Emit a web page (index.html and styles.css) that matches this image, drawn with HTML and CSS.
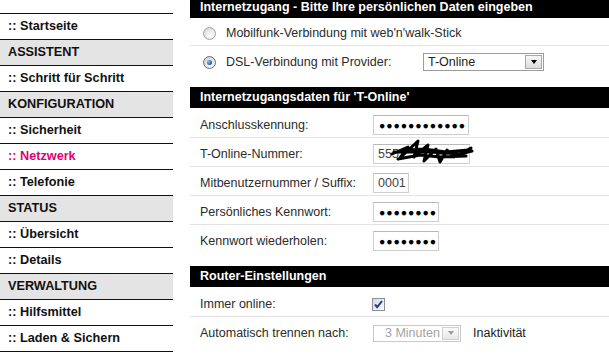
FILE: index.html
```html
<!DOCTYPE html>
<html lang="de">
<head>
<meta charset="utf-8">
<title>Netzwerk</title>
<link rel="stylesheet" href="styles.css">
</head>
<body>
<div class="page">
  <nav class="side">
    <a class="side-item">:: Startseite</a>
    <div class="side-item side-group">ASSISTENT</div>
    <a class="side-item">:: Schritt für Schritt</a>
    <div class="side-item side-group">KONFIGURATION</div>
    <a class="side-item">:: Sicherheit</a>
    <a class="side-item active">:: Netzwerk</a>
    <a class="side-item">:: Telefonie</a>
    <div class="side-item side-group">STATUS</div>
    <a class="side-item">:: Übersicht</a>
    <a class="side-item">:: Details</a>
    <div class="side-item side-group">VERWALTUNG</div>
    <a class="side-item">:: Hilfsmittel</a>
    <a class="side-item">:: Laden &amp; Sichern</a>
  </nav>

  <main class="main">
    <section class="sec">
      <h2 class="bar bar-first">Internetzugang - Bitte Ihre persönlichen Daten eingeben</h2>
      <div class="row row-first-s1">
        <span class="radio"></span>
        <span class="rlabel">Mobilfunk-Verbindung mit web'n'walk-Stick</span>
      </div>
      <div class="row row-last">
        <span class="radio checked"></span>
        <span class="rlabel rlabel-fixed">DSL-Verbindung mit Provider:</span>
        <div class="select select-provider">
          <span class="select-text">T-Online</span>
          <span class="select-btn"><span class="tri"></span></span>
        </div>
      </div>
    </section>

    <section class="sec">
      <h2 class="bar">Internetzugangsdaten für 'T-Online'</h2>
      <div class="row row-first">
        <span class="label">Anschlusskennung:</span>
        <div class="field pw w96">●●●●●●●●●●●●</div>
      </div>
      <div class="row">
        <span class="label">T-Online-Nummer:</span>
        <div class="field-wrap">
          <div class="field w97 plain">555</div>
          <svg class="scribble" width="84" height="28" viewBox="0 0 84 28">
            <path d="M2 16 L18 9 L10 20 L28 3 L24 19 L38 7 L34 23 L46 11 L50 24 L57 12 L64 19 L81 10 M4 14 L40 14 L70 16 L82 13 M8 21 L30 17 L50 19 L76 18 M16 12 L34 11 L56 14 L78 12" fill="none" stroke="#000" stroke-width="3" stroke-linecap="round" stroke-linejoin="round"/>
          </svg>
        </div>
      </div>
      <div class="row">
        <span class="label">Mitbenutzernummer / Suffix:</span>
        <div class="field w36 plain">0001</div>
      </div>
      <div class="row">
        <span class="label">Persönliches Kennwort:</span>
        <div class="field pw w66">●●●●●●●●</div>
      </div>
      <div class="row row-last">
        <span class="label">Kennwort wiederholen:</span>
        <div class="field pw w66">●●●●●●●●</div>
      </div>
    </section>

    <section class="sec">
      <h2 class="bar">Router-Einstellungen</h2>
      <div class="row row-first">
        <span class="label">Immer online:</span>
        <svg class="check" width="13" height="13" viewBox="0 0 13 13">
          <defs>
            <linearGradient id="cb" x1="0" y1="0" x2="1" y2="1">
              <stop offset="0" stop-color="#d3d7de"/>
              <stop offset="1" stop-color="#ffffff"/>
            </linearGradient>
          </defs>
          <rect x="0.5" y="0.5" width="12" height="12" fill="url(#cb)" stroke="#8a8f99"/>
          <path d="M3 6.5 L5.2 9.2 L10 3" fill="none" stroke="#2c3a8c" stroke-width="2"/>
        </svg>
      </div>
      <div class="row row-last">
        <span class="label">Automatisch trennen nach:</span>
        <div class="select select-disabled">
          <span class="select-text">3 Minuten</span>
          <span class="select-btn"><span class="tri"></span></span>
        </div>
        <span class="after">Inaktivität</span>
      </div>
    </section>
  </main>
</div>
</body>
</html>
```

FILE: styles.css
```css
html, body {
  margin: 0;
  padding: 0;
  background: #fff;
}

body {
  font-family: "Liberation Sans", Arial, sans-serif;
  font-size: 12.5px;
  color: #2b2b2b;
  width: 609px;
  height: 359px;
  overflow: hidden;
}

.page {
  display: flex;
  align-items: flex-start;
}

/* ---------- sidebar ---------- */
.side {
  flex: none;
  width: 173px;
  margin-top: 13px;
  border-top: 1px solid #111;
}

.side-item {
  display: block;
  height: 25px;
  line-height: 25px;
  padding-left: 8px;
  border-bottom: 1px solid #111;
  font-size: 12.7px;
  font-weight: bold;
  color: #111;
  text-decoration: none;
  white-space: nowrap;
}

.side-group {
  background: #e4e4e4;
}

.side-item.active {
  color: #e20074;
}

/* ---------- main ---------- */
.main {
  flex: 1;
  margin-left: 17px;
  min-width: 0;
}

.sec {
  margin-bottom: 13px;
}

.bar {
  margin: 0;
  background: #000;
  color: #fff;
  font-size: 12.5px;
  font-weight: bold;
  height: 21px;
  line-height: 21px;
  padding-left: 10px;
  white-space: nowrap;
}

.bar-first {
  height: 18px;
  line-height: 14px;
}

.row {
  display: flex;
  align-items: center;
  min-height: 20px;
  padding: 6px 0 2px 10px;
  border-bottom: 1px solid #e3e3e3;
  white-space: nowrap;
}

.row-first {
  padding-top: 7px;
}

.row-first-s1 {
  padding-top: 5px;
}

.row-last {
  border-bottom: none;
}

.label {
  flex: none;
  width: 173px;
}

/* radios */
.radio {
  flex: none;
  box-sizing: border-box;
  width: 13px;
  height: 13px;
  margin-left: 3px;
  border-radius: 50%;
  border: 1px solid #a3a3a3;
  background: radial-gradient(circle at 60% 65%, #ffffff 0, #f0f0f0 35%, #cfcfcf 100%);
  position: relative;
}

.radio.checked {
  border-color: #6f6f6f;
  background: radial-gradient(circle at 60% 65%, #ffffff 0, #e6e6e6 45%, #bdbdbd 100%);
}

.radio.checked::after {
  content: "";
  position: absolute;
  left: 3px;
  top: 3px;
  width: 5px;
  height: 5px;
  border-radius: 50%;
  background: radial-gradient(circle at 35% 35%, #9cc3f0 0, #2f64b8 55%, #163a78 100%);
}

.rlabel {
  margin-left: 10px;
}

.rlabel-fixed {
  flex: none;
  width: 197px;
}

/* selects */
.select {
  flex: none;
  box-sizing: border-box;
  display: flex;
  align-items: stretch;
  border: 1px solid #9c9c9c;
  background: #fff;
}

.select-provider {
  width: 121px;
  height: 18px;
}

.select-text {
  flex: 1;
  line-height: 16px;
  padding-left: 4px;
  color: #222;
}

.select-btn {
  flex: none;
  box-sizing: border-box;
  width: 17px;
  margin: 1px;
  border: 1px solid #a8a8a8;
  background: linear-gradient(#f7f7f7, #dcdcdc);
  display: flex;
  align-items: center;
  justify-content: center;
}

.tri {
  width: 0;
  height: 0;
  border-left: 3.5px solid transparent;
  border-right: 3.5px solid transparent;
  border-top: 4px solid #000;
}

.select-disabled {
  width: 88px;
  height: 17px;
  border-color: #c9c9c9;
}

.select-disabled .select-text {
  color: #a3a3a3;
  line-height: 15px;
  padding-left: 11px;
}

.select-disabled .select-btn {
  border-color: #cfcfcf;
  background: linear-gradient(#fafafa, #e8e8e8);
}

.select-disabled .tri {
  border-top-color: #9a9a9a;
}

.after {
  margin-left: 12px;
  color: #222;
}

/* text fields */
.field {
  flex: none;
  box-sizing: border-box;
  height: 20px;
  border: 1px solid #cfcfcf;
  border-top-color: #b9b9b9;
  background: #fff;
  padding: 0 4px;
  line-height: 18px;
  overflow: hidden;
}

.field.pw {
  font-size: 10.5px;
  letter-spacing: 0.9px;
  color: #000;
  padding-left: 5px;
}

.field.plain {
  color: #444;
  font-size: 12.5px;
}

.w96 { width: 96px; }
.w97 { width: 97px; }
.w36 { width: 36px; }
.w66 { width: 66px; }

.field-wrap {
  position: relative;
  flex: none;
}

.scribble {
  position: absolute;
  left: 17px;
  top: -6px;
}

.check {
  flex: none;
  display: block;
  margin-left: -1px;
}
```
